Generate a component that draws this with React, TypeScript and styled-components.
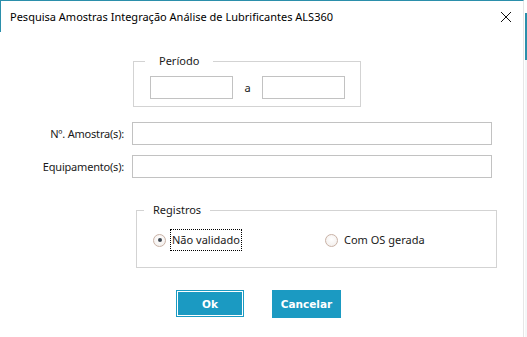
import styled, { createGlobalStyle } from 'styled-components';

const GlobalStyle = createGlobalStyle`
  html, body {
    margin: 0;
    padding: 0;
    background: #ffffff;
  }
  * {
    box-sizing: border-box;
  }
`;

const Screen = styled.div`
  display: flex;
  width: 527px;
  height: 337px;
  overflow: hidden;
  font-family: 'Noto Sans', 'Open Sans', sans-serif;
  font-size: 11px;
  color: #1a1a1a;
`;

const Dialog = styled.div`
  width: 524px;
  height: 337px;
  border-top: 1px solid #2b8fab;
  border-right: 1px solid #e6e6e6;
  background: #fff;
  display: flex;
  flex-direction: column;
`;

const Backdrop = styled.div`
  flex: 1;
  background: linear-gradient(#fff 0, #fff 13px, #2b8fab 13px, #2b8fab 60px, #f4f7f8 60px);
  border-left: 1px solid #fff;
`;

const TitleBar = styled.div`
  height: 31px;
  display: flex;
  align-items: center;
  justify-content: space-between;
  padding: 0 11px 0 9px;
  border-left: 1px solid #2b8fab;
  font-size: 11px;
  color: #000;
`;

const CloseButton = styled.button`
  border: none;
  background: none;
  padding: 0;
  width: 12px;
  height: 12px;
  display: flex;
  cursor: pointer;
`;

const Content = styled.div`
  display: flex;
  flex-direction: column;
  padding-top: 29px;
`;

const Group = styled.div<{ $left: number; $width: number; $height: number }>`
  position: relative;
  margin-left: ${(p) => p.$left}px;
  width: ${(p) => p.$width}px;
  height: ${(p) => p.$height}px;
  border: 1px solid #d3d3d3;
`;

const Legend = styled.span<{ $left: number; $pad: number }>`
  position: absolute;
  top: -9px;
  left: ${(p) => p.$left}px;
  padding: 0 ${(p) => p.$pad}px;
  background: #fff;
  line-height: 16px;
`;

const PeriodRow = styled.div`
  display: flex;
  align-items: center;
  padding: 14px 0 0 16px;
`;

const TextBox = styled.input<{ $width?: number }>`
  width: ${(p) => (p.$width ? `${p.$width}px` : '100%')};
  height: 23px;
  border: 1px solid #c2c2c2;
  background: #fff;
  outline: none;
  padding: 0 4px;
  font: inherit;
`;

const Sep = styled.span`
  width: 29px;
  text-align: center;
`;

const Fields = styled.div`
  display: grid;
  grid-template-columns: 124px 360px;
  column-gap: 8px;
  row-gap: 10px;
  align-items: center;
  margin-top: 15px;
`;

const FieldLabel = styled.label`
  text-align: right;
  white-space: nowrap;
  letter-spacing: -0.2px;
`;

const RadioRow = styled.div`
  display: flex;
  align-items: center;
  height: 22px;
  margin: 18px 0 0 16px;
`;

const RadioItem = styled.label<{ $width?: number }>`
  display: flex;
  align-items: center;
  gap: 2px;
  width: ${(p) => (p.$width ? `${p.$width}px` : 'auto')};
  cursor: pointer;
`;

const RadioCircle = styled.span<{ $checked?: boolean }>`
  position: relative;
  width: 13px;
  height: 13px;
  border-radius: 50%;
  border: 1px solid #c9b2a6;
  background: radial-gradient(circle at 50% 40%, #ffffff 0, #f1ece9 100%);
  margin-right: 2px;

  &::after {
    content: '';
    display: ${(p) => (p.$checked ? 'block' : 'none')};
    position: absolute;
    left: 3.5px;
    top: 3.5px;
    width: 4px;
    height: 4px;
    border-radius: 50%;
    background: #3d4650;
  }
`;

const RadioText = styled.span<{ $focus?: boolean }>`
  padding: 2px 1px;
  border: 1px dotted ${(p) => (p.$focus ? '#000' : 'transparent')};
  line-height: 16px;
`;

const Buttons = styled.div`
  display: flex;
  align-items: flex-start;
  gap: 28px;
  margin: 22px 0 0 176px;
`;

const ActionButton = styled.button<{ $default?: boolean }>`
  width: ${(p) => (p.$default ? 68 : 69)}px;
  height: ${(p) => (p.$default ? 27 : 28)}px;
  background: #1b9ac2;
  color: #fff;
  border: 1px solid #1b9ac2;
  box-shadow: ${(p) => (p.$default ? 'inset 0 0 0 1px #ffffff' : 'none')};
  font-family: 'DejaVu Sans', Verdana, sans-serif;
  font-weight: bold;
  font-size: 10.5px;
  cursor: pointer;
`;

export default function App() {
  return (
    <>
      <GlobalStyle />
      <Screen>
        <Dialog>
          <TitleBar>
            <span>Pesquisa Amostras Integração Análise de Lubrificantes ALS360</span>
            <CloseButton aria-label="Fechar">
              <svg width="12" height="12" viewBox="0 0 12 12">
                <path d="M1 1 L11 11 M11 1 L1 11" stroke="#111" strokeWidth="1" fill="none" />
              </svg>
            </CloseButton>
          </TitleBar>
          <Content>
            <Group $left={133} $width={228} $height={46}>
              <Legend $left={11} $pad={14}>Período</Legend>
              <PeriodRow>
                <TextBox $width={83} />
                <Sep>a</Sep>
                <TextBox $width={83} />
              </PeriodRow>
            </Group>

            <Fields>
              <FieldLabel>Nº. Amostra(s):</FieldLabel>
              <TextBox />
              <FieldLabel>Equipamento(s):</FieldLabel>
              <TextBox />
            </Fields>

            <Group $left={136} $width={361} $height={58} style={{ marginTop: 32 }}>
              <Legend $left={7} $pad={9}>Registros</Legend>
              <RadioRow>
                <RadioItem $width={172}>
                  <RadioCircle $checked />
                  <RadioText $focus>Não validado</RadioText>
                </RadioItem>
                <RadioItem>
                  <RadioCircle />
                  <RadioText>Com OS gerada</RadioText>
                </RadioItem>
              </RadioRow>
            </Group>

            <Buttons>
              <ActionButton $default>Ok</ActionButton>
              <ActionButton>Cancelar</ActionButton>
            </Buttons>
          </Content>
        </Dialog>
        <Backdrop />
      </Screen>
    </>
  );
}
